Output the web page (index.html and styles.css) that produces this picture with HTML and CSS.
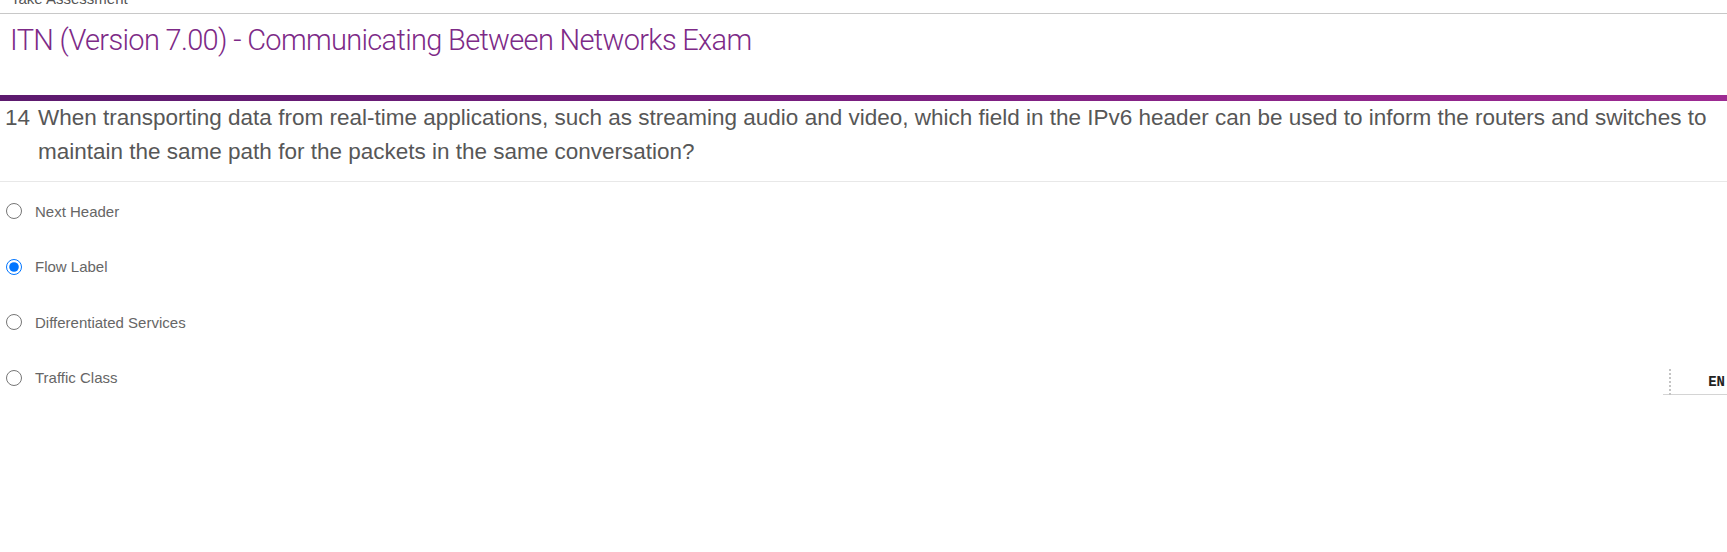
FILE: index.html
```html
<!DOCTYPE html>
<html lang="en">
<head>
<meta charset="utf-8">
<title>Take Assessment</title>
<link rel="stylesheet" href="styles.css">
</head>
<body>
<header class="topbar">
  <span class="topbar-text">Take Assessment</span>
</header>
<div class="title-wrap">
  <h1 class="title">ITN (Version 7.00) - Communicating Between Networks Exam</h1>
</div>
<div class="accent-bar"></div>
<section class="question">
  <span class="q-num">14</span>
  <p class="q-text">When transporting data from real-time applications, such as streaming audio and video, which field in the IPv6 header can be used to inform the routers and switches to maintain the same path for the packets in the same conversation?</p>
</section>
<ul class="options">
  <li class="option"><label><input type="radio" name="q14"><span>Next Header</span></label></li>
  <li class="option"><label><input type="radio" name="q14" checked><span>Flow Label</span></label></li>
  <li class="option"><label><input type="radio" name="q14"><span>Differentiated Services</span></label></li>
  <li class="option"><label><input type="radio" name="q14"><span>Traffic Class</span></label></li>
</ul>
<div class="ime">EN</div>
</body>
</html>
```
FILE: styles.css
```css
html, body {
  margin: 0;
  padding: 0;
  background: #ffffff;
}
body {
  font-family: "Liberation Sans", Arial, sans-serif;
  position: relative;
  width: 1727px;
  height: 552px;
  overflow: hidden;
}
.topbar {
  height: 13px;
  border-bottom: 1px solid #c8c8c8;
  overflow: hidden;
}
.topbar-text {
  display: block;
  margin-top: -9px;
  padding-left: 11px;
  font-size: 15px;
  line-height: 16px;
  color: #555555;
}
.title-wrap {
  height: 81px;
}
.title {
  margin: 0;
  padding: 8px 0 0 10px;
  font-family: Roboto, "Liberation Sans", sans-serif;
  font-weight: 300;
  font-size: 29px;
  letter-spacing: -0.68px;
  line-height: 36px;
  color: #7d2a87;
}
.accent-bar {
  height: 6px;
  background: linear-gradient(to right, #5c1a6e 0%, #7a1f80 50%, #9d2a92 100%);
}
.question {
  display: flex;
  align-items: flex-start;
  padding: 0 12px 0 5px;
  border-bottom: 1px solid #e8e8e8;
  height: 81px;
  box-sizing: border-box;
  color: #575757;
  font-size: 22.5px;
  line-height: 34px;
}
.q-num {
  width: 33px;
  flex: none;
}
.q-text {
  margin: 0;
  flex: 1;
}
.options {
  list-style: none;
  margin: 0;
  padding: 0 0 0 6px;
}
.option {
  height: 55.5px;
}
.option:first-child {
  margin-top: 20px;
}
.option label {
  display: flex;
  align-items: center;
  gap: 13px;
  font-size: 15px;
  color: #666666;
  height: 18px;
}
.option input {
  margin: 0;
  width: 16px;
  height: 16px;
  accent-color: #0075ff;
}
.ime {
  position: absolute;
  left: 1663px;
  top: 368px;
  width: 64px;
  height: 27px;
  border-bottom: 1px solid #d4d4d4;
  font-family: "Liberation Mono", monospace;
  font-size: 14px;
  font-weight: bold;
  line-height: 29px;
  text-align: right;
  padding-right: 2px;
  box-sizing: border-box;
  color: #222;
}
.ime::before {
  content: "";
  position: absolute;
  left: 6px;
  top: 1px;
  height: 26px;
  border-left: 2px dotted #c4c4c4;
}
```
